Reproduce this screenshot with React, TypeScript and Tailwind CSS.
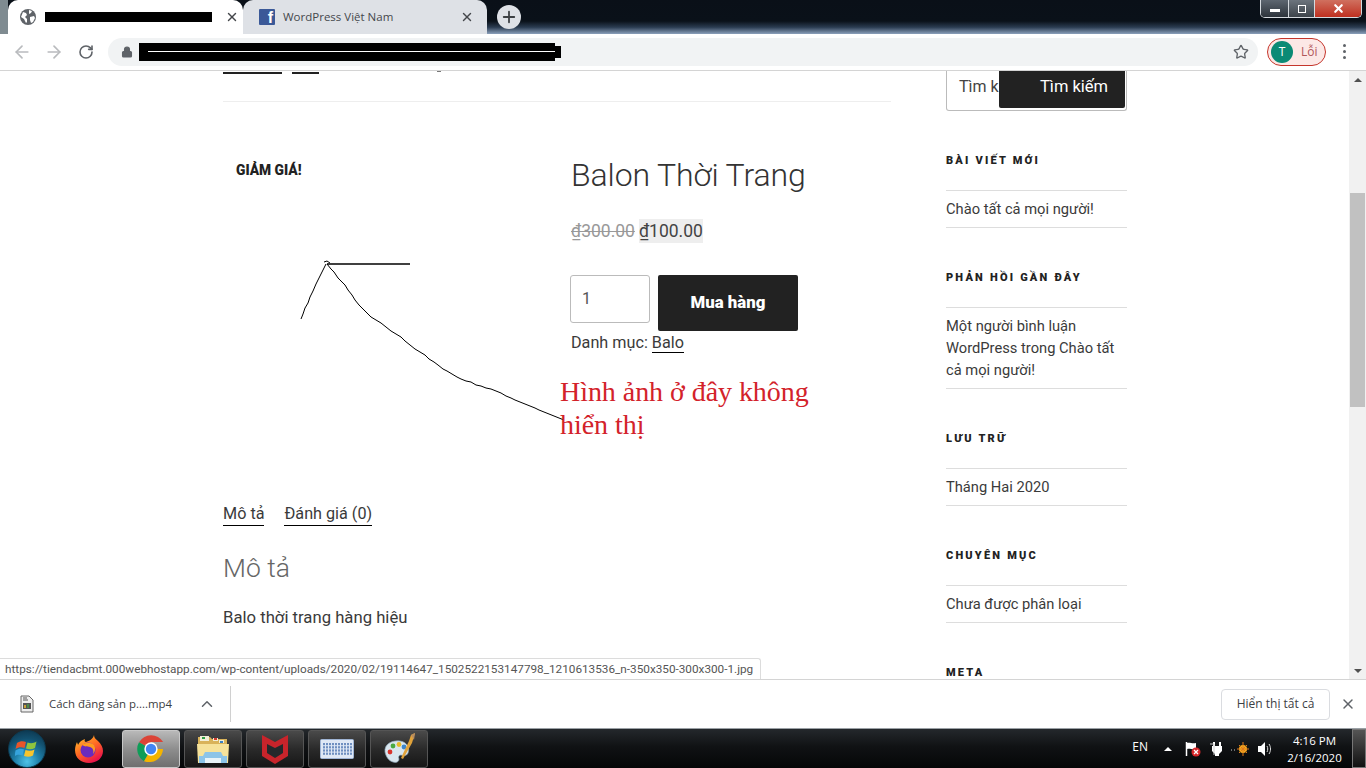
import React from "react";
import { ArrowLeft, ArrowRight, RotateCw, Lock, Star, X, Plus, ChevronUp } from "lucide-react";

const ui = "font-['Open_Sans','Noto_Sans',sans-serif]";
const page = "font-['Roboto','Noto_Sans',sans-serif]";

function Globe() {
  return (
    <svg width="16" height="16" viewBox="0 0 16 16" className="shrink-0">
      <circle cx="8" cy="8" r="8" fill="#5f6368" />
      <path d="M3 3l3 1 1 2-2 2 2 2v3l-1 1-2-4-3-2zM9 1l3 1-1 2-2 1zM10 8l4-1 1 2-2 4-2 1-1-3z" fill="#fff" />
    </svg>
  );
}

function ChromeLogo() {
  return (
    <svg width="32" height="32" viewBox="0 0 48 48">
      <path d="M24 24L6 14A21 21 0 0 1 42.2 13.5H24z" fill="#db4437" />
      <path d="M24 24L13.6 42.2A21 21 0 0 1 6 14z" fill="#0f9d58" />
      <path d="M24 24h18.2A21 21 0 0 1 13.6 42.2z" fill="#f4b400" />
      <circle cx="24" cy="24" r="10" fill="#fff" />
      <circle cx="24" cy="24" r="7.8" fill="#4285f4" />
    </svg>
  );
}

function Firefox() {
  return (
    <svg width="32" height="32" viewBox="0 0 32 32">
      <defs>
        <linearGradient id="ffa" x1="0" y1="0" x2="0.6" y2="1">
          <stop offset="0" stopColor="#ffcb2f" />
          <stop offset="0.55" stopColor="#ff6a22" />
          <stop offset="1" stopColor="#e8134b" />
        </linearGradient>
      </defs>
      <path d="M21 2c0 3 2 4 4 6 3 3 5 6 5 10 0 7-6 12-14 12S2 25 2 17c0-3 1-6 2-8 0 1 1 2 1 3 1-3 4-5 7-6-1 2 0 3 1 3 3-1 7-3 8-7z" fill="url(#ffa)" />
      <circle cx="15" cy="17" r="7.5" fill="#6a2bbd" />
      <path d="M9 12c3-3 9-3 12 0 2 3 1 7-1 9 1-3 0-6-3-7-3-1-5 0-8-2z" fill="#ff9a1f" />
    </svg>
  );
}

function Folder() {
  return (
    <svg width="34" height="32" viewBox="0 0 34 32">
      <path d="M2 4h12l2 2h15v22H2z" fill="#d9b35a" />
      <rect x="4" y="3" width="9" height="5" fill="#f3efd8" />
      <rect x="6" y="4" width="3" height="2" fill="#2f9e44" />
      <rect x="17" y="5" width="5" height="3" fill="#f3efd8" />
      <rect x="18" y="5" width="3" height="2" fill="#d23b2f" />
      <rect x="23" y="7" width="5" height="3" fill="#f3efd8" />
      <rect x="24" y="8" width="3" height="2" fill="#3b82c4" />
      <path d="M1 11h32l-1 19H2z" fill="#f6e29a" />
      <path d="M3 30v-7h4l2-4h16l2 4h4v7h-6v-5H9v5z" fill="#8cc4e8" />
      <rect x="9" y="25" width="16" height="5" fill="#e8f3f8" />
    </svg>
  );
}

function McAfee() {
  return (
    <svg width="28" height="32" viewBox="0 0 28 32">
      <path d="M1 2l13 7 13-7v21l-13 8-13-8z" fill="#c8242b" />
      <path d="M6 11l8 4 8-4v9l-8 5-8-5z" fill="#25282b" />
    </svg>
  );
}

function Keyboard() {
  const keys = [];
  for (let r = 0; r < 4; r++) for (let c = 0; c < 10; c++) keys.push(<rect key={`${r}-${c}`} x={3 + c * 3} y={4 + r * 3.2} width="2" height="2.2" fill="#6f8fc0" />);
  return (
    <svg width="34" height="20" viewBox="0 0 34 20">
      <rect x="0.5" y="0.5" width="33" height="19" rx="1" fill="#dfe8f5" stroke="#9fb4d4" />
      {keys}
    </svg>
  );
}

function Palette() {
  return (
    <svg width="34" height="34" viewBox="0 0 34 34">
      <path d="M3 20C2 12 10 8 18 9c7 1 10 7 8 12-1 3-5 3-7 2-2 0-3 2-2 4 0 3-3 4-6 3-4-1-7-5-8-10z" fill="#d9e6ee" stroke="#8aa4b4" strokeWidth="0.7" />
      <circle cx="8" cy="20" r="2.4" fill="#d8342c" />
      <circle cx="11" cy="14" r="2.4" fill="#49a942" />
      <circle cx="17" cy="12.5" r="2.4" fill="#e7bb2c" />
      <circle cx="22" cy="15" r="2.4" fill="#3c86cc" />
      <path d="M33 1l-3 10-9 16-2-1 8-17 2-6z" fill="#e0a23a" />
      <path d="M29 3l4-2-1 7z" fill="#b98d5e" />
    </svg>
  );
}

function WinOrb() {
  return (
    <div className="w-[38px] h-[38px] rounded-full border border-[#0c3b52] bg-[radial-gradient(circle_at_50%_85%,#4fc3e8_0%,#1d7ea8_35%,#12506f_65%,#0b2f45_100%)] flex items-center justify-center">
      <svg width="24" height="22" viewBox="0 0 24 22">
        <path d="M2 5c3-2 6-2 9-1l-1.500 6c-3-1-6-1-9 1z" fill="#e8552a" />
        <path d="M12.500 4.500c3 1 6 1 9-1L20 10c-3 1.500-6 1.500-9 .5z" fill="#8fc43e" />
        <path d="M.5 12.500c3-2 6-2 8.500-1L7.500 17.500c-3-1-6-1-8 1z" fill="#36a3dc" />
        <path d="M10.500 12c3 1 6 1 9-.5l-1.500 6c-3 1.500-6 1.500-9 .5z" fill="#f7c42c" />
      </svg>
    </div>
  );
}

function TaskButton({ active, children }: { active?: boolean; children: React.ReactNode }) {
  return (
    <div className={`w-[58px] h-[38px] rounded-[3px] border flex items-center justify-center ${active ? "border-[#c8c8c8] bg-[linear-gradient(180deg,#b9b9b9_0%,#8e8e8e_50%,#6f6f6f_100%)]" : "border-[#555] bg-[linear-gradient(180deg,#4a4a4a_0%,#2a2a2a_50%,#161616_100%)]"}`}>
      {children}
    </div>
  );
}

function Widget({ title, lines, className = "" }: { title: string; lines?: string[]; className?: string }) {
  return (
    <section className={className}>
      <h2 className="h-[20px] leading-[22px] text-[11px] font-black tracking-[2.2px] text-[#222] whitespace-nowrap">{title}</h2>
      {lines && (
        <ul className="mt-[20px] border-y border-[#ddd] py-[7px]">
          {lines.map((l) => (
            <li key={l} className="text-[14.7px] leading-[22px] text-[#3a3a3a]">{l}</li>
          ))}
        </ul>
      )}
    </section>
  );
}

const stroke =
  "M327 193l4 5 3 3 4 6 4 4 3 3 3 5 4 5 3 5 4 5 4 4 4 4 4 4 5 3 5 3 5 4 5 4 5 3 5 3 4 4 5 4 5 4 5 3 5 3 4 4 5 3 4 3 5 4 4 2 5 3 5 3 4 2 5 2 5 1 5 3 5 1 5 2 5 1 5 2 5 2 5 3 5 2 4 2 5 2 5 2 5 2 5 2 4 2 5 2 5 2 5 2 5 2 5 2";

export default function App() {
  return (
    <div className={`relative w-[1366px] h-[768px] overflow-hidden flex flex-col bg-white ${ui}`}>
      {/* Tab strip */}
      <div className="h-[34px] shrink-0 flex items-end bg-[linear-gradient(180deg,#0a1018_0%,#0a1119_62%,#2a3b50_80%,#8ba0bb_100%)]">
        <div className="w-[8px] h-[34px] bg-[#7f8b91]" />
        <div className="w-[235px] h-[34px] bg-white rounded-t-[10px] flex items-center pl-[12px] pr-[4px]">
          <Globe />
          <div className="ml-[9px] w-[167px] h-[10px] bg-black shrink-0" />
          <X size={14} strokeWidth={2.4} className="ml-[13px] text-[#44474b] shrink-0" />
        </div>
        <div className="w-[244px] h-[34px] bg-[#dee1e6] rounded-t-[10px] flex items-center pl-[16px]">
          <div className="w-[16px] h-[16px] bg-[#3b5998] rounded-[1px] flex items-end justify-end overflow-hidden shrink-0">
            <span className="text-white font-bold text-[16px] leading-[15px] pr-[2px] font-['Liberation_Sans',sans-serif]">f</span>
          </div>
          <span className="ml-[8px] text-[11.5px] text-[#45484c] w-[180px] shrink-0 whitespace-nowrap">WordPress Việt Nam</span>
          <X size={14} strokeWidth={2.4} className="-ml-[3px] text-[#44474b] shrink-0" />
        </div>
        <div className="ml-[10px] mb-[5px] w-[24px] h-[24px] rounded-full bg-[#dee1e6] flex items-center justify-center">
          <Plus size={18} strokeWidth={2.4} className="text-[#3c4043]" />
        </div>
        <div className="ml-auto self-start mr-[4px] w-[102px] h-[18px] rounded-b-[5px] border border-t-0 border-[#d5dadf] flex overflow-hidden">
          <div className="w-[28px] bg-[linear-gradient(180deg,#5d6670,#2c333b)] border-r border-[#d5dadf] flex items-center justify-center">
            <div className="w-[10px] h-[3px] bg-white mt-[4px]" />
          </div>
          <div className="w-[26px] bg-[linear-gradient(180deg,#6c747d,#3d444b)] border-r border-[#d5dadf] flex items-center justify-center">
            <div className="w-[8px] h-[8px] border-[1.5px] border-white" />
          </div>
          <div className="flex-1 bg-[linear-gradient(180deg,#d0705f,#bf3020)] flex items-center justify-center">
            <X size={13} strokeWidth={4} className="text-white" />
          </div>
        </div>
      </div>

      {/* Toolbar */}
      <div className="h-[37px] shrink-0 flex items-center bg-white border-b border-[#d4d4d4] pb-[1px]">
        <ArrowLeft size={20} strokeWidth={2} className="ml-[12px] text-[#b9bbbe]" />
        <ArrowRight size={20} strokeWidth={2} className="ml-[12px] text-[#b9bbbe]" />
        <RotateCw size={16} strokeWidth={2.4} className="ml-[14px] text-[#5f6368]" />
        <div className="ml-[14px] w-[1150px] h-[28px] rounded-full bg-[#f1f3f4] flex items-center pl-[13px] pr-[9px]">
          <Lock size={12} fill="#5f6368" strokeWidth={2.2} className="text-[#5f6368]" />
          <div className="relative ml-[6px] w-[416px] h-[18px] bg-black">
            <div className="absolute left-[9px] right-0 top-[8px] h-[1px] bg-white" />
            <div className="absolute -right-[6px] top-[3px] w-[6px] h-[12px] bg-black" />
          </div>
          <Star size={16} strokeWidth={2} className="ml-auto text-[#5f6368]" />
        </div>
        <div className="ml-[9px] w-[59px] h-[28px] rounded-full border border-[#c5352b] bg-[#fce8e6] flex items-center pl-[3px] gap-[8px]">
          <div className="w-[22px] h-[22px] rounded-full bg-[#0b8a75] text-white text-[12px] flex items-center justify-center">T</div>
          <span className="text-[12px] text-[#b0565a]">Lỗi</span>
        </div>
        <div className="ml-[17px] flex flex-col gap-[3px]">
          <div className="w-[3px] h-[3px] rounded-full bg-[#5f6368]" />
          <div className="w-[3px] h-[3px] rounded-full bg-[#5f6368]" />
          <div className="w-[3px] h-[3px] rounded-full bg-[#5f6368]" />
        </div>
      </div>

      {/* Page */}
      <div className={`relative flex-1 min-h-0 flex overflow-hidden ${page}`}>
        <div className="flex-1 min-w-0 overflow-hidden pl-[223px] flex items-start">
          <main className="w-[668px] text-[#333]">
            <div className="h-[31px] border-b border-[#eee] flex items-start gap-[10px]">
              <div className="w-[59px] h-[2px] bg-[#222] mt-[1px]" />
              <div className="w-[27px] h-[2px] bg-[#222] mt-[1px]" />
              <div className="ml-[108px] w-[4px] h-[1px] bg-[#777] mt-[0px]" />
            </div>

            <div className="flex mt-[53px] h-[348px]">
              <div className="w-[348px] pl-[13px]">
                <span className="block mt-[7px] text-[13.8px] leading-[16px] font-black text-[#222] whitespace-nowrap">GIẢM GIÁ!</span>
              </div>
              <div className="flex-1">
                <h1 className="text-[32px] leading-[40px] font-light text-[#333] -tracking-[0.1px] whitespace-nowrap">Balon Thời Trang</h1>
                <p className="mt-[24px] text-[17.5px] leading-[24px] flex">
                  <del className="text-[#999]">₫300.00</del>
                  <ins className="ml-[4px] no-underline bg-[#eee] text-[#444]">₫100.00</ins>
                </p>
                <div className="mt-[32px] flex items-start">
                  <div className="-ml-[1px] w-[80px] h-[48px] border border-[#bbb] rounded-[3px] pl-[11px] flex items-center text-[16px] text-[#555]">1</div>
                  <button className="ml-[8px] w-[140px] h-[56px] bg-[#222] rounded-[2px] text-white font-black text-[16.800px]">Mua hàng</button>
                </div>
                <p className="mt-[1px] text-[16.2px] leading-[22px] text-[#3a3a3a]">
                  Danh mục: <span className="border-b border-black">Balo</span>
                </p>
              </div>
            </div>

            <div className="flex gap-[20px] text-[16.2px] leading-[22px] text-[#3a3a3a]">
              <span className="border-b border-black h-[23px]">Mô tả</span>
              <span className="border-b border-black h-[23px]">Đánh giá (0)</span>
            </div>
            <h2 className="mt-[25px] text-[26.500px] leading-[34px] font-light text-[#666]">Mô tả</h2>
            <p className="mt-[21px] text-[16.700px] leading-[24px] text-[#3a3a3a]">Balo thời trang hàng hiệu</p>
          </main>
          <aside className="ml-[55px] w-[181px]">
            <div className="relative h-[40px] border-x border-b border-[#bbb] rounded-b-[3px] pl-[12px] text-[16px] text-[#444] leading-[31px] overflow-hidden">
              Tìm k
              <div className="absolute right-[1px] top-0 w-[126px] h-[37px] bg-[#222] rounded-b-[2px] text-white text-[16.500px] leading-[31px] pl-[41px] whitespace-nowrap">
                Tìm kiếm
              </div>
            </div>
            <Widget className="mt-[39px]" title="BÀI VIẾT MỚI" lines={["Chào tất cả mọi người!"]} />
            <Widget className="mt-[39px]" title="PHẢN HỒI GẦN ĐÂY" lines={["Một người bình luận WordPress trong Chào tất cả mọi người!"]} />
            <Widget className="mt-[39px]" title="LƯU TRỮ" lines={["Tháng Hai 2020"]} />
            <Widget className="mt-[39px]" title="CHUYÊN MỤC" lines={["Chưa được phân loại"]} />
            <Widget className="mt-[39px]" title="META" />
          </aside>
        </div>

        {/* Scrollbar */}
        <div className="w-[17px] shrink-0 bg-[#f1f1f1] flex flex-col items-center">
          <div className="h-[17px] flex items-center justify-center">
            <div className="w-0 h-0 border-x-[4px] border-x-transparent border-b-[4px] border-b-[#505050]" />
          </div>
          <div className="mt-[105px] w-[15px] h-[214px] bg-[#c1c1c1]" />
          <div className="mt-auto h-[17px] flex items-center justify-center">
            <div className="w-0 h-0 border-x-[4px] border-x-transparent border-t-[4px] border-t-[#505050]" />
          </div>
        </div>

        {/* Hand-drawn annotation over the screenshot */}
        <svg className="absolute left-0 top-0 pointer-events-none" width="1000" height="500" fill="none">
          <path d="M301 248l2-5 2-6 3-5 2-6 3-6 3-7 3-6 3-6 4-8" stroke="#000" strokeWidth="1" />
          <path d="M324 191l3-1 3 2" stroke="#000" strokeWidth="1" />
          <path d="M327 193h83" stroke="#000" strokeWidth="1.300" />
          <path d={stroke} stroke="#000" strokeWidth="1" />
        </svg>
        <div className="absolute left-[560px] top-[304px] w-[260px] text-[28px] leading-[33px] text-[#d3222a] tracking-[-0.05px] font-['Liberation_Serif',serif]">
          Hình ảnh ở đây không hiển thị
        </div>

        {/* Status bubble */}
        <div className="absolute left-0 bottom-0 w-[761px] h-[21px] bg-white border-t border-r border-[#dcdcdc] rounded-tr-[3px] pl-[5px] text-[11.750px] leading-[20px] text-[#555] whitespace-nowrap overflow-hidden">
          https://tiendacbmt.000webhostapp.com/wp-content/uploads/2020/02/19114647_1502522153147798_1210613536_n-350x350-300x300-1.jpg
        </div>
      </div>

      {/* Download bar */}
      <div className="h-[49px] shrink-0 bg-white border-t border-[#d4d4d4] flex items-center">
        <svg width="16" height="18" viewBox="0 0 16 18" className="ml-[19px]">
          <path d="M2 1h8l4 4v12H2z" fill="#eee" stroke="#666" />
          <rect x="4" y="8" width="8" height="6" fill="#555" />
          <rect x="5" y="10" width="2" height="3" fill="#c9a23a" />
          <rect x="8" y="9" width="2" height="4" fill="#4a8a4a" />
          <path d="M4 3h4M4 5h5" stroke="#555" />
        </svg>
        <span className="ml-[14px] w-[149px] text-[11.400px] text-[#3c4043] whitespace-nowrap">Cách đăng sản p....mp4</span>
        <ChevronUp size={18} strokeWidth={2} className="text-[#5f6368]" />
        <div className="ml-[14px] w-[1px] h-[36px] bg-[#d0d0d0]" />
        <button className="ml-auto w-[109px] h-[31px] border border-[#dadce0] rounded-[4px] text-[12px] text-[#3c4043]">Hiển thị tất cả</button>
        <X size={16} strokeWidth={2.2} className="ml-[10px] mr-[10px] text-[#5f6368]" />
      </div>

      {/* Taskbar */}
      <div className="h-[40px] shrink-0 flex items-center border-t border-[#9aa0a5] bg-[linear-gradient(180deg,#24282c_0%,#101214_45%,#050607_100%)] text-white">
        <div className="ml-[8px]"><WinOrb /></div>
        <div className="ml-[27px] w-[32px]"><Firefox /></div>
        <div className="ml-[17px] flex gap-[4px]">
          <TaskButton active><ChromeLogo /></TaskButton>
          <TaskButton><Folder /></TaskButton>
          <TaskButton><McAfee /></TaskButton>
          <TaskButton><Keyboard /></TaskButton>
          <TaskButton><Palette /></TaskButton>
        </div>
        <span className="ml-auto mb-[4px] text-[12px]">EN</span>
        <div className="ml-[16px] w-0 h-0 border-x-[4px] border-x-transparent border-b-[4px] border-b-white" />
        <svg width="16" height="16" viewBox="0 0 16 16" className="ml-[13px]">
          <path d="M1.500 1v14" stroke="#fff" strokeWidth="1.500" />
          <path d="M2 2c3-1 5 1 9 0v6c-4 1-6-1-9 0z" fill="#fff" />
          <circle cx="11" cy="11" r="4.500" fill="#d8282a" />
          <path d="M9 9l4 4M13 9l-4 4" stroke="#fff" strokeWidth="1.300" />
        </svg>
        <svg width="16" height="16" viewBox="0 0 16 16" className="ml-[8px]">
          <path d="M3 5h10v5l-3 3v2H6v-2L3 10z" fill="#fff" />
          <path d="M5 1v4M11 1v4" stroke="#fff" strokeWidth="2" />
          <path d="M1 3h4v11" fill="none" stroke="#ccc" />
        </svg>
        <svg width="20" height="16" viewBox="0 0 20 16" className="ml-[5px]">
          <circle cx="13" cy="8" r="4" fill="#f5b21f" />
          <path d="M13 1v14M7 8h12M9 4l8 8M17 4l-8 8" stroke="#e0781a" />
          <path d="M1 9h1M4 9h1" stroke="#ccc" />
        </svg>
        <svg width="16" height="16" viewBox="0 0 16 16" className="ml-[7px]">
          <path d="M1 5h3l4-4v14l-4-4H1z" fill="#fff" />
          <path d="M10 5c1 2 1 4 0 6M12 3c2 3 2 7 0 10" stroke="#ddd" fill="none" />
        </svg>
        <div className="ml-[4px] w-[75px] flex flex-col items-center text-[11.500px] leading-[17px]">
          <span>4:16 PM</span>
          <span>2/16/2020</span>
        </div>
        <div className="w-[14px] h-[39px] border border-[#777] bg-[linear-gradient(180deg,#555,#111)]" />
      </div>
    </div>
  );
}
